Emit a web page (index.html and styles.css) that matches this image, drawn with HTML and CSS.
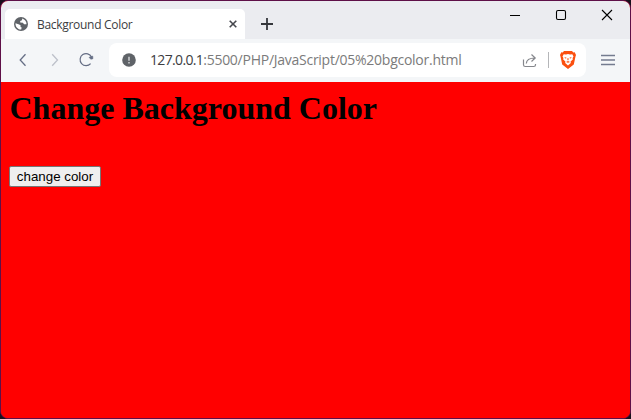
FILE: index.html
```html
<!DOCTYPE html>
<html lang="en">
<head>
<meta charset="utf-8">
<title>Background Color</title>
<link rel="stylesheet" href="styles.css">
</head>
<body>
<div class="window">
  <header class="tabstrip">
    <div class="tab">
      <svg class="globe" width="14" height="14" viewBox="0 0 14 14"><circle cx="7" cy="7" r="7" fill="#5f6368"/><path d="M8.2 1.400 8 3.200 6.200 4.100v1.500l2.700.2 1.100 1.400h2.500c.2-2.500-1.500-5-4.300-5.800zM1.500 6.200l3.700 1.200 1.500 1.100-.2 1.600 1.200.5-.5 2C4.200 12.700 1.200 10 1.500 6.200z" fill="#fff"/></svg>
      <span class="tab-title">Background Color</span>
      <svg class="tab-close" width="8" height="8" viewBox="0 0 8 8"><path d="M.7.7l6.600 6.600M7.300.7.700 7.300" stroke="#45474d" stroke-width="1.600"/></svg>
    </div>
    <svg class="new-tab" width="12" height="12" viewBox="0 0 12 12"><path d="M6 0v12M0 6h12" stroke="#35373c" stroke-width="1.800"/></svg>
    <div class="controls">
      <svg width="12" height="12" viewBox="0 0 12 12"><path d="M1 6.500h10" stroke="#000"/></svg>
      <svg width="12" height="12" viewBox="0 0 12 12"><rect x="1.500" y="1.500" width="9" height="9" rx="1.500" fill="none" stroke="#000" stroke-width="1.100"/></svg>
      <svg width="12" height="12" viewBox="0 0 12 12"><path d="M1 1l10 10M11 1 1 11" stroke="#000" stroke-width="1.100"/></svg>
    </div>
  </header>
  <nav class="toolbar">
    <svg class="back" width="8" height="14" viewBox="0 0 8 14"><path d="M6.500 1.200 1.200 7l5.300 5.800" fill="none" stroke="#656e85" stroke-width="1.300"/></svg>
    <svg class="forward" width="8" height="14" viewBox="0 0 8 14"><path d="M1.200 1.200 6.500 7l-5.300 5.800" fill="none" stroke="#bdc1ca" stroke-width="1.300"/></svg>
    <svg class="reload" width="15" height="15" viewBox="0 0 15 15"><path d="M11.600 11.600A6 6 0 1 1 12.500 5" fill="none" stroke="#656e85" stroke-width="1.200"/><path d="M10 5.300 13.700 4 14 6.700 11.800 7.300z" fill="#656e85" stroke="#656e85" stroke-width=".5"/></svg>
    <div class="address">
      <svg class="info" width="14" height="14" viewBox="0 0 14 14"><circle cx="7" cy="7" r="6.800" fill="#5f6368"/><path d="M7 3.700v4M7 9v1.500" stroke="#d9dadd" stroke-width="1.400"/></svg>
      <span class="url"><span class="host">127.0.0.1</span>:5500/PHP/JavaScript/05%20bgcolor.html</span>
      <svg class="share" width="15" height="15" viewBox="0 0 15 15"><path d="M1.500 6.500v5.200q0 1.800 1.800 1.800h8.400q1.800 0 1.800-1.800v-.7M4.300 10.500c.2-3.800 2.500-5.500 8.700-5.500M9.500 1.500 13.200 5 9.500 8.500" fill="none" stroke="#85878c" stroke-width="1.200"/></svg>
      <span class="divider"></span>
      <svg class="shield" width="16" height="18" viewBox="0 0 16 18"><path d="M4 0h8l1.300 1.400 1.400-.1L16 4l-.5 1.500-1.700 8L8 18l-5.800-4.500-1.700-8L0 4l1.300-2.700 1.400.1z" fill="#fb5010"/><path d="M3.700 3.300 6 3.600 8 3l2 .6 2.300-.3 1.200 2.100-.9 1.500.2 1.600-2.200 2 .2 1.500L8 14.500 5.200 12l.2-1.500-2.200-2 .2-1.600-.9-1.500z" fill="#fff"/><path d="M4.200 6l2.400.7-.8 1zM11.800 6l-2.400.7.8 1zM7.600 7h.8l.2 2-.6.500-.6-.5zM6 10.900 8 10l2 .9-2 .8z" fill="#fb5010"/></svg>
    </div>
    <svg class="menu" width="14" height="12" viewBox="0 0 14 12"><path d="M0 1.500h14M0 6h14M0 10.500h14" stroke="#737b8f" stroke-width="1.300"/></svg>
  </nav>
  <main class="page">
    <h1>Change Background Color</h1>
    <button>change color</button>
  </main>
</div>
</body>
</html>
```

FILE: styles.css
```css
* { box-sizing: border-box; }
body { margin: 0; height: 419px; overflow: hidden; background: #17101b; }
svg { display: block; flex: none; }
.window {
  height: 419px;
  border: 1px solid #5e1048;
  border-radius: 8px;
  overflow: hidden;
  display: flex;
  flex-direction: column;
  background: #f00;
}
.tabstrip {
  height: 38px;
  background: #ebecf0;
  display: flex;
  align-items: flex-start;
  padding: 8px 17px 0 4px;
}
.tab {
  width: 240px;
  height: 30px;
  padding: 0 8px 0 9px;
  display: flex;
  align-items: center;
  background: #fff;
  border-radius: 5px 5px 0 0;
  font-family: "Open Sans", "Noto Sans", sans-serif;
  font-size: 12px;
  color: #3c3d42;
}
.tab-title { margin-left: 9px; white-space: nowrap; letter-spacing: -0.3px; }
.tab-close { margin-left: auto; }
.new-tab { margin: 9px 0 0 16px; }
.controls { display: flex; gap: 34px; margin-left: auto; }
.toolbar {
  height: 43px;
  background: #f4f6f8;
  display: flex;
  align-items: center;
  padding: 0 15px 2px 18px;
}
.forward { margin-left: 24px; }
.reload { margin-left: 20px; }
.address {
  width: 477px;
  height: 34px;
  margin: 1px auto 0 15px;
  padding: 0 10px 0 13px;
  border-radius: 8px;
  background: #fff;
  display: flex;
  align-items: center;
}
.url {
  margin: -2px 0 0 14px;
  font: 14px "Open Sans", "Noto Sans", sans-serif;
  letter-spacing: -0.26px;
  color: #7b7b7b;
  white-space: nowrap;
}
.host { color: #3c3d42; letter-spacing: -0.65px; }
.share { margin-left: auto; }
.divider { width: 1px; height: 16px; margin: 0 11px; background: #b5b6b9; }
.page { flex: 1; padding: 8px; background: #f00; color: #000; }
h1 {
  margin: 0;
  padding-left: 0.5px;
  font: bold 32px/37px "Liberation Serif", serif;
}
button {
  display: block;
  width: 92px;
  height: 21px;
  margin-top: 39px;
  padding: 0;
  border: 1px solid #767676;
  border-radius: 2px;
  background: #efefef;
  color: #000;
  font: 13.333px "Liberation Sans", sans-serif;
}
```
